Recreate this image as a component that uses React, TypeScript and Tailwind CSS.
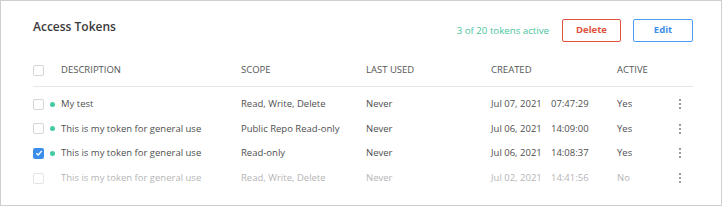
import React from "react";

type Row = {
  desc: string;
  scope: string;
  last: string;
  date: string;
  time: string;
  active: string;
  checked?: boolean;
  on: boolean;
};

const rows: Row[] = [
  { desc: "My test", scope: "Read, Write, Delete", last: "Never", date: "Jul 07, 2021", time: "07:47:29", active: "Yes", on: true },
  { desc: "This is my token for general use", scope: "Public Repo Read-only", last: "Never", date: "Jul 06, 2021", time: "14:09:00", active: "Yes", on: true },
  { desc: "This is my token for general use", scope: "Read-only", last: "Never", date: "Jul 06, 2021", time: "14:08:37", active: "Yes", on: true, checked: true },
  { desc: "This is my token for general use", scope: "Read, Write, Delete", last: "Never", date: "Jul 02, 2021", time: "14:41:56", active: "No", on: false },
];

function Box({ checked, faded }: { checked?: boolean; faded?: boolean }) {
  if (checked) {
    return (
      <div className="w-[11px] h-[11px] rounded-[2px] bg-[#3b8eea] flex items-center justify-center">
        <svg width="8" height="8" viewBox="0 0 8 8">
          <path d="M1.3 4.2 L3.2 6 L6.8 1.8" fill="none" stroke="white" strokeWidth="1.3" />
        </svg>
      </div>
    );
  }
  return <div className={`w-[11px] h-[11px] rounded-[2px] border ${faded ? "border-[#e4e4e4]" : "border-[#d6d6d6]"} bg-white`} />;
}

function Dots() {
  return (
    <div className="flex flex-col gap-[2px] items-center">
      <span className="w-[2px] h-[2px] bg-[#9a9a9a]" />
      <span className="w-[2px] h-[2px] bg-[#9a9a9a]" />
      <span className="w-[2px] h-[2px] bg-[#9a9a9a]" />
    </div>
  );
}

const grid = "grid grid-cols-[17px_11px_180px_125px_125px_126px_61px_1fr] items-center";

export default function App() {
  return (
    <div
      className="w-[722px] h-[206px] border border-[#cfcfcf] bg-white overflow-hidden"
      style={{ fontFamily: '"Open Sans", sans-serif' }}
    >
      <div className="flex items-start justify-between pl-[32px] pr-[28px] pt-[18px]">
        <div className="text-[12px] leading-[16px] font-semibold text-[#3a3a3a]">Access Tokens</div>
        <div className="flex items-center">
          <span className="text-[9.7px] leading-[23px] text-[#4cc4a0] mr-[13px]">3 of 20 tokens active</span>
          <button className="w-[59px] h-[23px] border border-[#e0523c] rounded-[2px] text-[9.5px] font-bold text-[#e0523c] flex items-center justify-center">
            Delete
          </button>
          <button className="w-[60px] h-[23px] ml-[12px] border border-[#4b9cf2] rounded-[2px] text-[9.5px] font-bold text-[#3b8eea] flex items-center justify-center">
            Edit
          </button>
        </div>
      </div>

      <div className="pl-[32px] pr-[28px] mt-[13px]">
        <div className={`${grid} h-[32px] border-b border-[#e8e8e8] text-[9.5px] text-[#555]`}>
          <Box />
          <span />
          <span>DESCRIPTION</span>
          <span>SCOPE</span>
          <span>LAST USED</span>
          <span>CREATED</span>
          <span>ACTIVE</span>
          <span />
        </div>
        <div className="pt-[5px]">
          {rows.map((r, i) => (
            <div
              key={i}
              className={`${grid} h-[24.6px] text-[9.5px] ${r.on ? "text-[#4f4f4f]" : "text-[#b5b5b5]"}`}
            >
              <Box checked={r.checked} faded={!r.on} />
              <span className="flex items-center">
                {r.on && <span className="w-[5px] h-[5px] rounded-full bg-[#45c9a3]" />}
              </span>
              <span>{r.desc}</span>
              <span>{r.scope}</span>
              <span>{r.last}</span>
              <span className="flex">
                <span className="w-[60px]">{r.date}</span>
                <span>{r.time}</span>
              </span>
              <span>{r.active}</span>
              <span className="flex justify-start pl-[1px]">
                <Dots />
              </span>
            </div>
          ))}
        </div>
      </div>
    </div>
  );
}
